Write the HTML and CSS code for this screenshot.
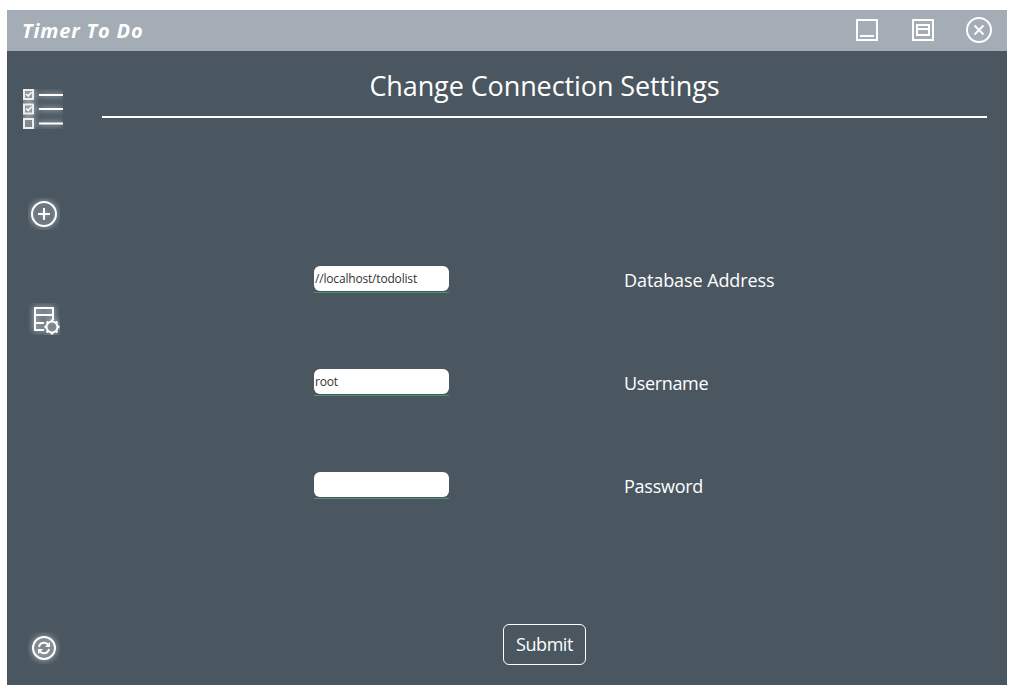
FILE: index.html
```
<!DOCTYPE html>
<html lang="en">
<head>
<meta charset="utf-8">
<title>Timer To Do</title>
<link rel="stylesheet" href="styles.css">
</head>
<body>
<div class="window">
  <header class="titlebar">
    <h1 class="app-name">Timer To Do</h1>
    <div class="controls">
      <svg class="control" viewBox="0 0 26 26"><path d="M3 3h20v20H3zM6 19h14"/></svg>
      <svg class="control" viewBox="0 0 26 26"><path d="M3 3h20v20H3zM7 8h12v10H7zM7 12h12"/></svg>
      <svg class="control" viewBox="0 0 26 26"><circle cx="13" cy="13" r="12"/><path d="M8.500 8.500l9 9M17.500 8.500l-9 9"/></svg>
    </div>
  </header>
  <div class="body">
    <nav class="sidebar">
      <svg class="nav-icon nav-list" viewBox="0 0 40 40">
        <g class="glow"><path class="box" d="M1 1h9v9H1zM1 15.500h9v9H1zM1 30h9v9H1z"/><path class="tick" d="M3 5l2.200 2L8.600 3.200M3 19.500l2.200 2 3.400-3.800"/><path d="M16 6h24M16 20h24M16 34.500h24"/></g>
      </svg>
      <svg class="nav-icon nav-add" viewBox="0 0 32 32">
        <g class="glow"><circle cx="16" cy="16" r="12"/><path d="M16 10v12M10 16h12"/></g>
      </svg>
      <svg class="nav-icon nav-db" viewBox="0 0 32 32">
        <g class="glow"><path d="M16 27H7V5h18v12M7 12h18M7 20h9"/><circle cx="24" cy="24" r="5.500"/><path class="teeth" d="M24 16.500v2M24 29.500v2M16.500 24h2M29.500 24h2M18.700 18.700l1.400 1.400M27.900 27.900l1.400 1.400M29.300 18.700l-1.400 1.400M20.100 27.900l-1.400 1.400"/></g>
      </svg>
      <svg class="nav-icon nav-sync" viewBox="0 0 32 32">
        <g class="glow"><circle cx="16" cy="16" r="11"/><path d="M11 15c.6-3 3-4.200 5.200-4.200 1.800 0 3.200.8 4.200 2.200M21 17c-.6 3-3 4.200-5.200 4.200-1.800 0-3.200-.8-4.200-2.200"/><path class="arrow" d="M22 10v5h-5zM10 22v-5h5z"/></g>
      </svg>
    </nav>
    <main class="content">
      <h2 class="heading">Change Connection Settings</h2>
      <form class="form">
        <div class="fields">
          <div class="field"><input class="input" id="address" type="text" value="//localhost/todolist"></div>
          <label class="label label-address" for="address">Database Address</label>
          <div class="field"><input class="input" id="user" type="text" value="root"></div>
          <label class="label label-user" for="user">Username</label>
          <div class="field"><input class="input" id="pass" type="password"></div>
          <label class="label label-pass" for="pass">Password</label>
        </div>
        <button class="submit" type="button">Submit</button>
      </form>
    </main>
  </div>
</div>
</body>
</html>
```
FILE: styles.css
```
* { box-sizing: border-box; }
body {
  margin: 0;
  padding: 10px 11px 5px 7px;
  background: #fff;
  color: #fff;
  font-family: "Open Sans", "Noto Sans", sans-serif;
}
.window { width: 1000px; height: 675px; background: #4a5761; }
.titlebar {
  display: flex;
  align-items: center;
  justify-content: space-between;
  height: 41px;
  padding: 0 15px 0 15px;
  background: #a4acb5;
}
.app-name { margin: 0; font-size: 20px; font-weight: 700; font-style: italic; letter-spacing: 0.85px; line-height: 40px; white-space: nowrap; }
.controls { display: flex; gap: 30px; margin-top: -1px; }
.control { width: 26px; height: 26px; fill: none; stroke: #fff; stroke-width: 2; }
.body { display: flex; height: 634px; }
.sidebar { display: flex; flex-direction: column; width: 95px; padding: 38px 0 21px 21px; }
.nav-icon { flex: none; width: 32px; height: 32px; fill: none; stroke: #fff; stroke-width: 2; overflow: hidden; }
.glow { filter: drop-shadow(0 0 3px rgba(255, 255, 255, 0.9)); }
.nav-list { width: 40px; height: 40px; margin-left: -5px; }
.nav-add { margin-top: 69px; }
.nav-db { margin-top: 73px; }
.nav-sync { margin-top: auto; }
.box { stroke: #eceef0; }
.tick { stroke-width: 1.5; }
.teeth { stroke-width: 2.4; }
.arrow { fill: #fff; stroke: none; }
.content { width: 885px; }
.heading {
  height: 67px;
  margin: 0;
  padding-top: 16px;
  border-bottom: 2px solid #fff;
  font-size: 27px;
  font-weight: 400;
  letter-spacing: -0.1px;
  line-height: 38px;
  text-align: center;
  white-space: nowrap;
}
.form { display: flex; flex-direction: column; align-items: center; padding-top: 148px; }
.fields {
  display: grid;
  grid-template-columns: 135px 1fr;
  grid-auto-rows: 27px;
  gap: 76px 175px;
  align-self: stretch;
  padding-left: 212px;
}
.field { border-bottom: 1px solid #4a9468; }
.input {
  display: block;
  width: 100%;
  height: 25px;
  padding: 0 1px;
  border: 0;
  border-radius: 6px;
  outline: 0;
  background: #fff;
  color: #333;
  font: 12px "Open Sans", "Noto Sans", sans-serif;
  letter-spacing: -0.18px;
}
.label { justify-self: start; font-size: 18px; line-height: 29px; white-space: nowrap; }
.label-address { letter-spacing: -0.08px; }
.label-user { letter-spacing: -0.35px; }
.label-pass { letter-spacing: -0.25px; }
.submit {
  width: 83px;
  height: 41px;
  margin-top: 125px;
  padding: 0 0 2px;
  border: 1px solid #fff;
  border-radius: 6px;
  background: transparent;
  color: #fff;
  font: 18px "Open Sans", "Noto Sans", sans-serif;
  letter-spacing: -0.45px;
}
```
